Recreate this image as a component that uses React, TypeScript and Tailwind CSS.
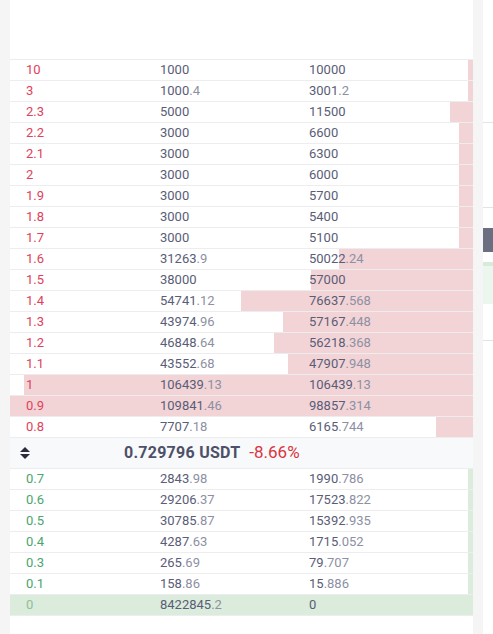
const asks: [string, string, string, number][] = [
  ["10", "1000", "10000", 5],
  ["3", "1000.4", "3001.2", 5],
  ["2.3", "5000", "11500", 23],
  ["2.2", "3000", "6600", 14],
  ["2.1", "3000", "6300", 14],
  ["2", "3000", "6000", 14],
  ["1.9", "3000", "5700", 14],
  ["1.8", "3000", "5400", 14],
  ["1.7", "3000", "5100", 14],
  ["1.6", "31263.9", "50022.24", 134],
  ["1.5", "38000", "57000", 162],
  ["1.4", "54741.12", "76637.568", 232],
  ["1.3", "43974.96", "57167.448", 190],
  ["1.2", "46848.64", "56218.368", 199],
  ["1.1", "43552.68", "47907.948", 185],
  ["1", "106439.13", "106439.13", 449],
  ["0.9", "109841.46", "98857.314", 463],
  ["0.8", "7707.18", "6165.744", 37],
];

const bids: [string, string, string, number][] = [
  ["0.7", "2843.98", "1990.786", 5],
  ["0.6", "29206.37", "17523.822", 5],
  ["0.5", "30785.87", "15392.935", 5],
  ["0.4", "4287.63", "1715.052", 5],
  ["0.3", "265.69", "79.707", 5],
  ["0.1", "158.86", "15.886", 5],
  ["0", "8422845.2", "0", 463],
];

const Num = ({ value }: { value: string }) => {
  const i = value.indexOf(".");
  if (i < 0) return <span>{value}</span>;
  return (
    <span>
      {value.slice(0, i)}
      <span className="text-[#8d90a3]">{value.slice(i)}</span>
    </span>
  );
};

const Row = ({ row, side }: { row: [string, string, string, number]; side: "ask" | "bid" }) => {
  const [price, amount, total, bar] = row;
  const priceColor =
    side === "ask" ? "text-[#e0415b]" : price === "0" ? "text-[#8fbf98]" : "text-[#4aa56e]";
  return (
    <div className="relative h-[21px] border-t border-[#ededf0]">
      {/* depth bar */}
      <div
        className={`absolute right-0 top-0 bottom-0 ${side === "ask" ? "bg-[#f2d4d7]" : "bg-[#dbebdc]"}`}
        style={{ width: bar }}
      />
      <div className="relative grid grid-cols-[134px_149px_1fr] pl-4 h-5 items-center text-[13px] text-[#5a5d77]">
        <span className={priceColor}>{price}</span>
        <Num value={amount} />
        <Num value={total} />
      </div>
    </div>
  );
};

export default function App() {
  return (
    <div className="flex h-[634px] w-[493px] bg-[#f5f5f5] font-['Roboto',sans-serif] overflow-hidden">
      <div className="w-[10px] shrink-0" />
      <div className="w-[463px] shrink-0 bg-white flex flex-col">
        <div className="h-[59px]" />
        {asks.map((r) => (
          <Row key={"a" + r[0]} row={r} side="ask" />
        ))}
        <div className="h-[31px] border-t border-[#ededf0] bg-[#f8f9fb] flex items-center pl-[10px]">
          <svg width="10" height="12" viewBox="0 0 10 12" className="shrink-0">
            <path d="M5 0 L10 5 L0 5 Z" fill="#2b2b3d" />
            <path d="M0 7 L10 7 L5 12 Z" fill="#2b2b3d" />
          </svg>
          <span className="ml-[94px] text-[16px] font-bold tracking-[0.25px] text-[#4d5068]">0.729796 USDT</span>
          <span className="ml-[9px] text-[17px] text-[#d8353f]">-8.66%</span>
        </div>
        {bids.map((r) => (
          <Row key={"b" + r[0]} row={r} side="bid" />
        ))}
        <div className="border-t border-[#ededf0]" />
      </div>
      <div className="w-[10px] shrink-0" />
      <div className="w-[10px] shrink-0 bg-white flex flex-col">
        <div className="h-[122px]" />
        <div className="h-px bg-[#e2e2e8]" />
        <div className="h-[84px]" />
        <div className="h-px bg-[#e2e2e8]" />
        <div className="h-[20px]" />
        <div className="h-[24px] bg-[#6b6e80]" />
        <div className="h-[10px]" />
        <div className="h-[4px] bg-[#d6ecd9]" />
        <div className="h-[38px] bg-[#ebf6ee]" />
        <div className="h-[36px]" />
        <div className="h-px bg-[#e2e2e8]" />
      </div>
    </div>
  );
}
